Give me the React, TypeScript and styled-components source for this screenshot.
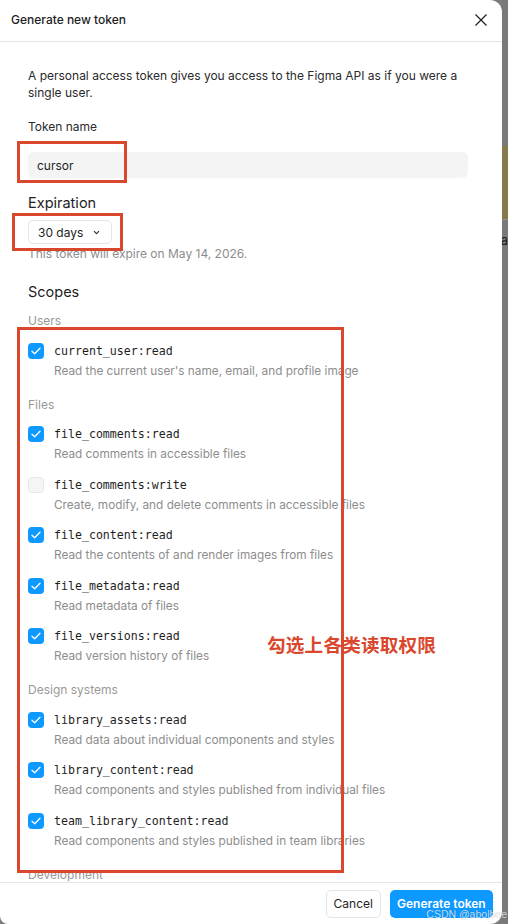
import React from 'react';
import styled, { createGlobalStyle, css } from 'styled-components';

const GlobalStyle = createGlobalStyle`
  html, body {
    margin: 0;
    padding: 0;
    background: #7c7c7c;
    font-family: Inter, 'Noto Sans', sans-serif;
  }
  * {
    box-sizing: border-box;
  }
`;

const annotationRed = '#d9482d';

const Page = styled.div`
  position: relative;
  display: flex;
  width: 508px;
  height: 924px;
  overflow: hidden;
`;

const Modal = styled.div`
  position: relative;
  display: flex;
  flex-direction: column;
  width: 502px;
  height: 924px;
  background: #fff;
  border-radius: 0 12px 12px 8px;
  overflow: hidden;
`;

const Backdrop = styled.div`
  flex: 1;
  display: flex;
  flex-direction: column;
  padding-top: 146px;
  background: #7a7a7a;
`;

const BackdropCard = styled.div`
  height: 74px;
  background: #86794c;
  border-bottom: 1px solid #8e8e8e;
  margin-bottom: 12px;
`;

const BackdropText = styled.span`
  font-size: 13px;
  color: #1a1a1a;
  margin-left: -1px;
`;

const Header = styled.div`
  display: flex;
  align-items: center;
  justify-content: space-between;
  height: 42px;
  padding: 0 14px 0 11px;
  border-bottom: 1px solid #e6e6e6;
  flex-shrink: 0;
`;

const Title = styled.span`
  font-size: 12px;
  font-weight: 500;
  color: #1e1e1e;
  margin-top: -2px;
`;

const CloseButton = styled.button`
  display: flex;
  width: 14px;
  height: 14px;
  padding: 0;
  border: none;
  background: none;
  margin-top: -2px;
`;

const Body = styled.div`
  flex: 1;
  overflow: hidden;
  padding: 25px 34px 0 28px;
`;

const Intro = styled.p`
  margin: 0;
  font-size: 12px;
  line-height: 17px;
  color: #2a2a2a;
`;

const FieldLabel = styled.div`
  margin-top: 17px;
  font-size: 12px;
  line-height: 17px;
  color: #2a2a2a;
`;

const TextInput = styled.div`
  margin-top: 17px;
  height: 26px;
  padding: 0 9px;
  display: flex;
  align-items: center;
  background: #f4f4f4;
  border-radius: 6px;
  font-size: 12px;
  color: #1e1e1e;
`;

const SectionTitle = styled.div<{ $gap: number }>`
  margin-top: ${({ $gap }) => $gap}px;
  font-size: 14.5px;
  line-height: 20px;
  color: #1e1e1e;
`;

const Select = styled.button`
  margin-top: 7px;
  height: 24px;
  display: inline-flex;
  align-items: center;
  gap: 10px;
  padding: 0 11px 0 9px;
  border: 1px solid #e6e6e6;
  border-radius: 5px;
  background: #fff;
  font-family: Inter, sans-serif;
  font-size: 12px;
  color: #1e1e1e;
`;

const Hint = styled.div`
  margin-top: 1px;
  font-size: 12px;
  line-height: 17px;
  color: #8d8d8d;
`;

const Group = styled.div<{ $first?: boolean }>`
  margin-top: ${({ $first }) => ($first ? 10 : 16)}px;
`;

const GroupTitle = styled.div`
  font-size: 12px;
  line-height: 17px;
  color: #999;
`;

const ScopeList = styled.div`
  display: flex;
  flex-direction: column;
  gap: 11.5px;
  margin-top: 11.5px;
`;

const Scope = styled.div`
  display: flex;
  flex-direction: column;
`;

const ScopeRow = styled.div`
  display: flex;
  align-items: center;
  gap: 10px;
  height: 20px;
`;

const Box = styled.span<{ $checked: boolean }>`
  display: flex;
  align-items: center;
  justify-content: center;
  width: 16px;
  height: 16px;
  border-radius: 4px;
  ${({ $checked }) =>
    $checked
      ? css`
          background: #0d99ff;
        `
      : css`
          background: #f5f5f5;
          border: 1px solid #e8e8e8;
        `}
`;

const ScopeName = styled.span`
  font-family: 'DejaVu Sans Mono', 'Liberation Mono', monospace;
  font-size: 11.6px;
  color: #1e1e1e;
`;

const ScopeDesc = styled.div`
  margin-top: 2px;
  padding-left: 26px;
  font-size: 11.8px;
  line-height: 17px;
  color: #8d8d8d;
  white-space: nowrap;
`;

const Footer = styled.div`
  display: flex;
  justify-content: flex-end;
  align-items: center;
  gap: 9px;
  height: 42px;
  padding: 0 9px;
  border-top: 1px solid #e6e6e6;
  flex-shrink: 0;
`;

const Button = styled.button<{ $primary?: boolean }>`
  height: 28px;
  padding: 0 7px;
  border-radius: 5px;
  font-family: Inter, sans-serif;
  font-size: 12px;
  ${({ $primary }) =>
    $primary
      ? css`
          min-width: 102px;
          background: #0d99ff;
          border: none;
          color: #fff;
          font-weight: 600;
        `
      : css`
          min-width: 54px;
          background: #fff;
          border: 1px solid #e3e3e3;
          color: #1e1e1e;
        `}
`;

const Mark = styled.div<{ $x: number; $y: number; $w: number; $h: number }>`
  position: absolute;
  left: ${({ $x }) => $x}px;
  top: ${({ $y }) => $y}px;
  width: ${({ $w }) => $w}px;
  height: ${({ $h }) => $h}px;
  border: 3px solid ${annotationRed};
  pointer-events: none;
`;

const Note = styled.div`
  position: absolute;
  left: 267px;
  top: 630px;
  font-family: 'Noto Sans CJK SC', sans-serif;
  font-size: 18.6px;
  font-weight: 700;
  color: ${annotationRed};
  letter-spacing: 0.2px;
`;

const Watermark = styled.div`
  position: absolute;
  right: 1px;
  bottom: 4px;
  font-family: 'Liberation Sans', Arial, sans-serif;
  font-size: 10.5px;
  color: rgba(255, 255, 255, 0.75);
  text-shadow: 0 0 1px rgba(0, 0, 0, 0.25);
`;

type ScopeItem = { name: string; desc: string; checked: boolean };
type ScopeGroup = { title: string; items: ScopeItem[] };

const groups: ScopeGroup[] = [
  {
    title: 'Users',
    items: [
      {
        name: 'current_user:read',
        desc: "Read the current user's name, email, and profile image",
        checked: true,
      },
    ],
  },
  {
    title: 'Files',
    items: [
      { name: 'file_comments:read', desc: 'Read comments in accessible files', checked: true },
      {
        name: 'file_comments:write',
        desc: 'Create, modify, and delete comments in accessible files',
        checked: false,
      },
      {
        name: 'file_content:read',
        desc: 'Read the contents of and render images from files',
        checked: true,
      },
      { name: 'file_metadata:read', desc: 'Read metadata of files', checked: true },
      { name: 'file_versions:read', desc: 'Read version history of files', checked: true },
    ],
  },
  {
    title: 'Design systems',
    items: [
      {
        name: 'library_assets:read',
        desc: 'Read data about individual components and styles',
        checked: true,
      },
      {
        name: 'library_content:read',
        desc: 'Read components and styles published from individual files',
        checked: true,
      },
      {
        name: 'team_library_content:read',
        desc: 'Read components and styles published in team libraries',
        checked: true,
      },
    ],
  },
  { title: 'Development', items: [] },
];

const Check = () => (
  <svg width="10" height="8" viewBox="0 0 10 8" fill="none">
    <path d="M1 4.2L3.7 6.8L9 1.2" stroke="#fff" strokeWidth="1.3" strokeLinecap="round" strokeLinejoin="round" />
  </svg>
);

const CloseIcon = () => (
  <svg width="14" height="14" viewBox="0 0 14 14" fill="none">
    <path d="M1.5 1.5L12.5 12.5M12.5 1.5L1.5 12.5" stroke="#1e1e1e" strokeWidth="1.2" />
  </svg>
);

const Chevron = () => (
  <svg width="7" height="5" viewBox="0 0 7 5" fill="none">
    <path d="M1 1.2L3.5 3.7L6 1.2" stroke="#333" strokeWidth="1.1" />
  </svg>
);

export default function App() {
  return (
    <Page>
      <GlobalStyle />
      <Modal>
        <Header>
          <Title>Generate new token</Title>
          <CloseButton aria-label="Close">
            <CloseIcon />
          </CloseButton>
        </Header>
        <Body>
          <Intro>
            A personal access token gives you access to the Figma API as if you were a
            <br />
            single user.
          </Intro>
          <FieldLabel>Token name</FieldLabel>
          <TextInput>cursor</TextInput>
          <SectionTitle $gap={15}>Expiration</SectionTitle>
          <Select>
            30 days
            <Chevron />
          </Select>
          <Hint>This token will expire on May 14, 2026.</Hint>
          <SectionTitle $gap={20}>Scopes</SectionTitle>
          {groups.map((group, i) => (
            <Group key={group.title} $first={i === 0}>
              <GroupTitle>{group.title}</GroupTitle>
              {group.items.length > 0 && (
                <ScopeList>
                  {group.items.map((item) => (
                    <Scope key={item.name}>
                      <ScopeRow>
                        <Box $checked={item.checked}>{item.checked && <Check />}</Box>
                        <ScopeName>{item.name}</ScopeName>
                      </ScopeRow>
                      <ScopeDesc>{item.desc}</ScopeDesc>
                    </Scope>
                  ))}
                </ScopeList>
              )}
            </Group>
          ))}
        </Body>
        <Footer>
          <Button>Cancel</Button>
          <Button $primary>Generate token</Button>
        </Footer>
      </Modal>
      <Backdrop>
        <BackdropCard />
        <BackdropText>a</BackdropText>
      </Backdrop>

      <Mark $x={17} $y={141} $w={110} $h={42} />
      <Mark $x={12} $y={213} $w={111} $h={38} />
      <Mark $x={17} $y={327} $w={327} $h={546} />
      <Note>勾选上各类读取权限</Note>
      <Watermark>CSDN @abolbee</Watermark>
    </Page>
  );
}
